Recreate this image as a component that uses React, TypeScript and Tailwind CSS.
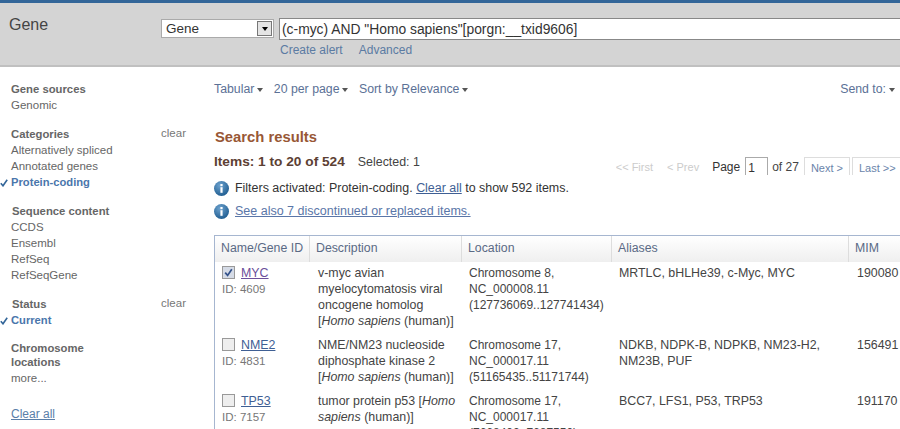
function Caret() {
  return <span className="ml-[3px] inline-block h-0 w-0 border-x-[3.5px] border-t-[4px] border-x-transparent border-t-[#555] align-middle" />;
}

function InfoIcon() {
  return (
    <svg width="15" height="15" viewBox="0 0 15 15" className="shrink-0">
      <defs>
        <radialGradient id="infoGrad" cx="40%" cy="30%" r="75%">
          <stop offset="0%" stopColor="#6ea3cf" />
          <stop offset="100%" stopColor="#1c5a8e" />
        </radialGradient>
      </defs>
      <circle cx="7.5" cy="7.5" r="7.5" fill="url(#infoGrad)" />
      <rect x="6.4" y="6.2" width="2.2" height="5.6" fill="#fff" />
      <rect x="6.4" y="3" width="2.2" height="2.2" fill="#fff" />
    </svg>
  );
}

function Facet({ title, items, clear, titleOffset }: { title: string; items: { label: string; on?: boolean }[]; clear?: boolean; titleOffset?: boolean }) {
  return (
    <div className="mb-[14px]">
      <div className="flex justify-between pb-px pr-[28px]">
        <div className={`w-[100px] text-[11.3px] font-bold leading-[14px] text-[#666] ${titleOffset ? "ml-px" : ""}`}>{title}</div>
        {clear && <span className="-mt-px text-[11.5px] leading-[14px] text-[#777]">clear</span>}
      </div>
      {items.map((it) => (
        <div key={it.label} className="relative h-[16px] text-[11.5px] leading-[16px] text-[#666]">
          {it.on && (
            <svg width="8" height="8" viewBox="0 0 8 8" className="absolute -left-[11px] top-[5px]">
              <path d="M0.8 4.2 L3 6.8 L7.2 0.8" fill="none" stroke="#336699" strokeWidth="1.6" />
            </svg>
          )}
          <span className={it.on ? "text-[11.2px] font-bold text-[#4a76ac]" : ""}>{it.label}</span>
        </div>
      ))}
    </div>
  );
}

const rows = [
  {
    name: "MYC",
    id: "4609",
    checked: true,
    desc: ["v-myc avian", "myelocytomatosis viral", "oncogene homolog"],
    tail: true,
    loc: ["Chromosome 8,", "NC_000008.11", "(127736069..127741434)"],
    aliases: "MRTLC, bHLHe39, c-Myc, MYC",
    mim: "190080",
    h: "h-[72px]",
  },
  {
    name: "NME2",
    id: "4831",
    checked: false,
    desc: ["NME/NM23 nucleoside", "diphosphate kinase 2"],
    tail: true,
    loc: ["Chromosome 17,", "NC_000017.11", "(51165435..51171744)"],
    aliases: "NDKB, NDPK-B, NDPKB, NM23-H2, NM23B, PUF",
    mim: "156491",
    h: "h-[56px]",
  },
  {
    name: "TP53",
    id: "7157",
    checked: false,
    desc: [],
    tail: false,
    loc: ["Chromosome 17,", "NC_000017.11", "(7668402..7687550)"],
    aliases: "BCC7, LFS1, P53, TRP53",
    mim: "191170",
    h: "h-[64px]",
  },
];

const columns = "grid grid-cols-[95px_152px_150px_237px_70px]";

export default function App() {
  return (
    <div className="h-[429px] w-[900px] overflow-hidden bg-white font-['Liberation_Sans',Arial,sans-serif]">
      <header className="h-[67px] border-t-[3px] border-b-[2px] border-t-[#336699] border-b-[#c0c0c0] bg-[#d4d4d4]">
        <div className="flex">
          <div className="w-[161px] pl-[9px] pt-[12px] text-[16px] leading-[20px] text-[#444]">Gene</div>
          <div className="flex-1 pt-[15px]">
            <div className="flex items-start">
              <div className="mt-px flex h-[19px] w-[113px] items-center justify-between border border-[#aaa] bg-white pl-[4px] pr-px text-[13.5px] text-[#333]">
                <span className="pt-px">Gene</span>
                <span className="flex h-[15px] w-[15px] items-center justify-center border border-[#777] bg-[#e4e4e4]">
                  <span className="h-0 w-0 border-x-[3.5px] border-t-[4px] border-x-transparent border-t-black" />
                </span>
              </div>
              <div className="ml-[5px] h-[22px] flex-1 border-y border-l border-[#888] bg-white pl-[2px] text-[13.85px] leading-[20px] text-[#333]">
                (c-myc) AND "Homo sapiens"[porgn:__txid9606]
              </div>
            </div>
            <div className="ml-[119px] mt-[3px] flex gap-[16px] text-[12px] leading-[14px] text-[#5b7ba3]">
              <span>Create alert</span>
              <span>Advanced</span>
            </div>
          </div>
        </div>
      </header>

      <div className="flex">
        <aside className="w-[214px] shrink-0 pl-[11px] pt-[15px]">
          <Facet title="Gene sources" items={[{ label: "Genomic" }]} />
          <Facet title="Categories" clear items={[{ label: "Alternatively spliced" }, { label: "Annotated genes" }, { label: "Protein-coding", on: true }]} />
          <Facet title="Sequence content" titleOffset items={[{ label: "CCDS" }, { label: "Ensembl" }, { label: "RefSeq" }, { label: "RefSeqGene" }]} />
          <Facet title="Status" clear titleOffset items={[{ label: "Current", on: true }]} />
          <div className="-mt-px">
            <Facet title="Chromosome locations" items={[{ label: "more..." }]} />
          </div>
          <div className="mt-[21px] text-[12px] leading-[14px] text-[#5a7ea8] underline">Clear all</div>
        </aside>

        <main className="min-w-0 flex-1">
          <div className="flex justify-between pr-[5px] pt-[15px] text-[12.3px] leading-[14px] text-[#5b7196]">
            <div className="flex gap-[10.5px]">
              <span>Tabular<Caret /></span>
              <span>20 per page<Caret /></span>
              <span>Sort by Relevance<Caret /></span>
            </div>
            <span>Send to:<Caret /></span>
          </div>

          <h2 className="ml-px mt-[32px] text-[14.8px] font-bold leading-[18px] text-[#985735]">Search results</h2>

          <div className="relative mt-[6px] flex h-[24px] w-[686px] text-[12.4px]">
            <div className="pt-[3px] leading-[14px] text-[#444]">
              <span className="text-[13.7px] font-bold text-[#5c4033]">Items: 1 to 20 of 524</span>
              <span className="ml-[13px]">Selected: 1</span>
            </div>
            <div className="absolute right-0 top-[5px] flex h-[18px] items-start overflow-hidden whitespace-nowrap text-[11px] leading-[20px]">
              <span className="mr-[14px] text-[#ccc]">&lt;&lt; First</span>
              <span className="mr-[13px] text-[#ccc]">&lt; Prev</span>
              <span className="mr-[5px] text-[12px] text-[#333]">Page</span>
              <span className="mr-[4px] h-[18px] w-[23px] border-x border-t border-[#aaa] pl-[2px] text-[12px] text-[#333]">1</span>
              <span className="mr-[5px] text-[12px] text-[#444]">of 27</span>
              <span className="mr-[2px] h-[18px] border-x border-t border-[#ddd] px-[6px] text-[#6a84aa]">Next &gt;</span>
              <span className="h-[18px] w-[48px] border-l border-t border-[#ddd] pl-[6px] text-[#6a84aa]">Last &gt;&gt;</span>
            </div>
          </div>

          <div className="mt-px flex h-[22px] items-center gap-[6px] text-[12.45px] text-[#333]">
            <InfoIcon />
            <span>
              Filters activated: Protein-coding. <span className="text-[#3f5f94] underline">Clear all</span> to show 592 items.
            </span>
          </div>
          <div className="mt-[2px] flex h-[21px] items-center gap-[6px] text-[12.5px] text-[#5a76a8]">
            <InfoIcon />
            <span className="underline">See also 7 discontinued or replaced items.</span>
          </div>

          <div className="mt-[13px] border-l border-t border-[#a6b6d0]">
            <div className={`${columns} h-[26px] bg-gradient-to-b from-white to-[#efefef] text-[12.3px] leading-[25px] text-[#5a6a85]`}>
              {["Name/Gene ID", "Description", "Location", "Aliases", "MIM"].map((h) => (
                <div key={h} className="border-r border-[#ddd] pl-[6px] last:border-r-0">{h}</div>
              ))}
            </div>
            {rows.map((r) => (
              <div key={r.name} className={`${columns} ${r.h} pt-[3px] text-[12.4px] leading-[16px] text-[#444]`}>
                <div className="pl-[7px]">
                  <div className="flex items-start">
                    <span className={`mr-[6px] mt-px flex h-[13px] w-[13px] items-center justify-center border border-[#999] ${r.checked ? "bg-[#d5dbe6]" : "bg-[#eee]"}`}>
                      {r.checked && (
                        <svg width="9" height="9" viewBox="0 0 9 9">
                          <path d="M1.2 4.6 L3.6 7.4 L7.8 1.2" fill="none" stroke="#33518a" strokeWidth="1.7" />
                        </svg>
                      )}
                    </span>
                    <span className={`underline ${r.checked ? "text-[#6b4f9b]" : "text-[#3f5f94]"}`}>{r.name}</span>
                  </div>
                  <div className="text-[11.5px] text-[#777]">ID: {r.id}</div>
                </div>
                <div className="pl-[8px]">
                  {r.desc.map((d) => (
                    <div key={d}>{d}</div>
                  ))}
                  {r.tail ? (
                    <div>
                      [<i>Homo sapiens</i> (human)]
                    </div>
                  ) : (
                    <div className="w-[145px]">
                      tumor protein p53 [<i>Homo sapiens</i> (human)]
                    </div>
                  )}
                </div>
                <div className="pl-[7px] text-[12px]">
                  {r.loc.map((l) => (
                    <div key={l}>{l}</div>
                  ))}
                </div>
                <div className="pl-[7px] pr-[15px]">{r.aliases}</div>
                <div className="pl-[8px]">{r.mim}</div>
              </div>
            ))}
          </div>
        </main>
      </div>
    </div>
  );
}
